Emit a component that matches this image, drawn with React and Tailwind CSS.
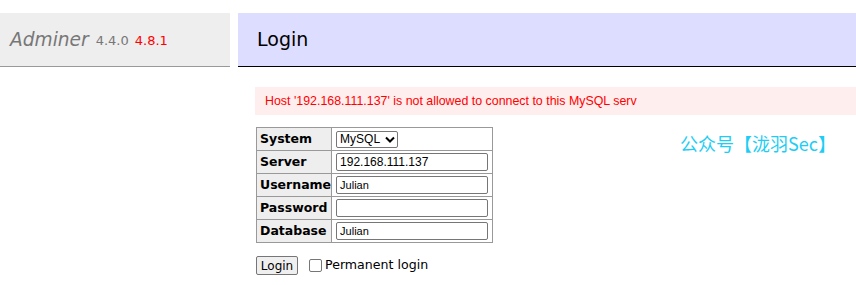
import React from "react";

const rows = [
  { label: "System", type: "select" },
  { label: "Server", value: "192.168.111.137", big: true },
  { label: "Username", value: "Julian" },
  { label: "Password", value: "" },
  { label: "Database", value: "Julian" },
];

export default function App() {
  return (
    <div className="relative w-[856px] h-[285px] bg-white overflow-hidden" style={{ fontFamily: "'DejaVu Sans', Verdana, sans-serif" }}>
      <div className="flex mt-[13px] gap-[8px]">
        <div className="w-[230px] h-[54px] bg-[#eeeeee] border-b border-[#999999] flex items-center pl-[10px]">
          <span className="italic text-[18.6px] text-[#777777]">Adminer</span>
          <span className="text-[13px] text-[#777777] ml-[7px] mt-[3px]">4.4.0</span>
          <span className="text-[13px] text-[#ff0000] ml-[6px] mt-[3px]">4.8.1</span>
        </div>
        <div className="flex-1 h-[54px] bg-[#ddddff] border-b border-black flex items-center pl-[19px]">
          <span className="text-[19px] text-black">Login</span>
        </div>
      </div>

      <div className="ml-[255px] mt-[20px] h-[28px] bg-[#ffeeee] flex items-center pl-[10px]">
        <span className="text-[12.4px] text-[#ff0000]" style={{ fontFamily: "Tahoma, 'Liberation Sans', sans-serif" }}>
          Host '192.168.111.137' is not allowed to connect to this MySQL serv
        </span>
      </div>

      <div className="ml-[256px] mt-[12px]">
        <table className="border-collapse">
          <tbody>
            {rows.map((r) => (
              <tr key={r.label} className="h-[23px]">
                <th className="w-[75px] bg-[#eeeeee] border border-[#999999] text-left pl-[3px] pr-0 text-[12.5px] font-bold text-black leading-none">
                  {r.label}
                </th>
                <td className="w-[161px] border border-[#999999] pl-[4px] pr-[3px] py-0">
                  {r.type === "select" ? (
                    <div className="w-[62px] h-[17px] border border-[#767676] rounded-[2px] flex items-center pl-[3px] text-[12px] text-black" style={{ fontFamily: "Arial, 'Liberation Sans', sans-serif" }}>
                      <span>MySQL</span>
                      <svg className="ml-[5px]" width="10" height="7" viewBox="0 0 10 7">
                        <path d="M1 1.5 L5 5.5 L9 1.5" stroke="black" strokeWidth="2" fill="none" />
                      </svg>
                    </div>
                  ) : (
                    <div className="w-[152px] h-[18px] border border-[#767676] rounded-[2px] flex items-center pl-[3px] text-black" style={{ fontFamily: "Arial, 'Liberation Sans', sans-serif", fontSize: r.big ? "12px" : "11px" }}>
                      {r.value}
                    </div>
                  )}
                </td>
              </tr>
            ))}
          </tbody>
        </table>
        <div className="flex items-center mt-[13px]">
          <div className="w-[42px] h-[19px] bg-[#efefef] border border-[#767676] rounded-[2px] flex items-center justify-center text-[12px] text-black">
            Login
          </div>
          <div className="ml-[11px] w-[13px] h-[13px] border border-[#767676] rounded-[2px] bg-white" />
          <span className="ml-[3px] text-[12.6px] text-black">Permanent login</span>
        </div>
      </div>

      <div className="absolute left-[680px] top-[130px] text-[18px] text-[#1ecdf5]" style={{ fontFamily: "'Noto Sans CJK SC', sans-serif" }}>
        公众号【泷羽Sec】
      </div>
    </div>
  );
}
